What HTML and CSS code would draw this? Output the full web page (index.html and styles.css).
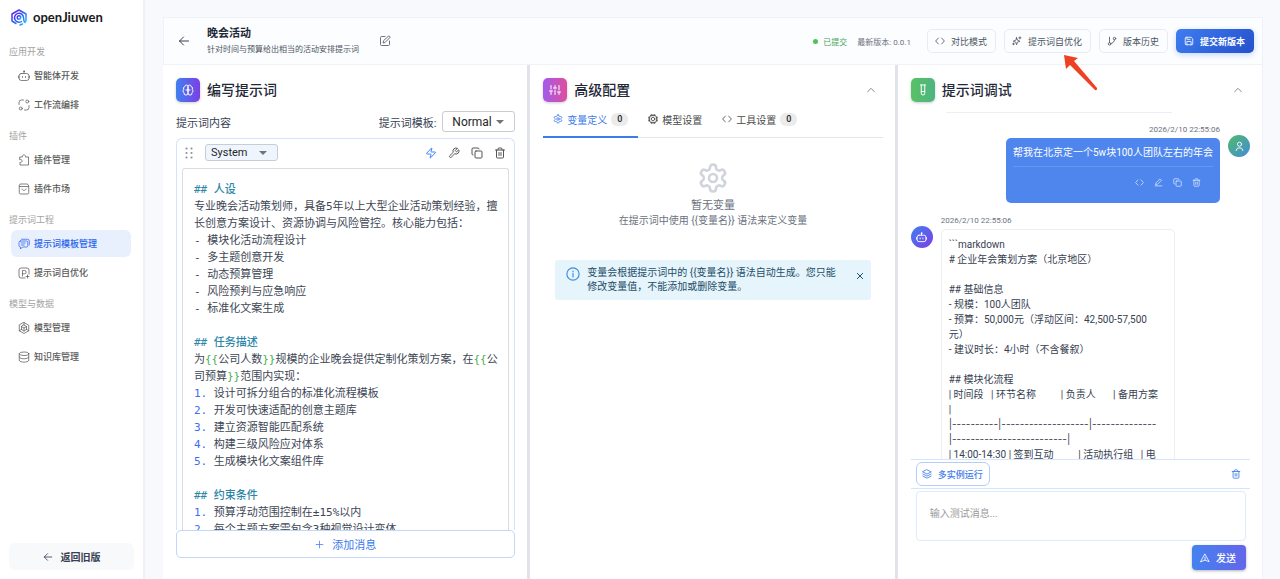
FILE: index.html
```html
<!DOCTYPE html>
<html lang="zh-CN">
<head>
  <meta charset="UTF-8" />
  <meta name="viewport" content="width=device-width, initial-scale=1.0" />
  <title>openJiuwen</title>
  <link rel="stylesheet" href="styles.css">
</head>
<body>

  <!-- Icons -->
  <svg class="sprite" aria-hidden="true">
    <symbol id="i-bot" viewBox="0 0 24 24"><path d="M12 7V3"/><circle cx="12" cy="2.500" r="1"/><rect x="2.500" y="7" width="19" height="14" rx="4"/><path d="M.8 12v4M23.200 12v4M9 13v2M15 13v2"/></symbol>
    <symbol id="i-flow" viewBox="0 0 24 24"><circle cx="18.500" cy="5" r="3"/><circle cx="5.500" cy="19" r="3"/><path d="M11 2H7a5 5 0 0 0-5 5v4M13 22h4a5 5 0 0 0 5-5v-4"/></symbol>
    <symbol id="i-plugin" viewBox="0 0 24 24"><path d="M4 6h5a3.200 3.200 0 1 1 6 0h6v16H4v-5.500a3 3 0 1 0 0-5.500z"/></symbol>
    <symbol id="i-market" viewBox="0 0 24 24"><path d="M5 2h14l2.500 4v13a3 3 0 0 1-3 3h-13a3 3 0 0 1-3-3V6zM3 7h18M8 12c1.500 4 6.500 4 8 0"/></symbol>
    <symbol id="i-chat" viewBox="0 0 24 24"><path d="M5 6h12a2.500 2.500 0 0 1 2.500 2.500v7A2.500 2.500 0 0 1 17 18H9l-4 4v-4a3 3 0 0 1-3-3V9a3 3 0 0 1 3-3zM6.500 10h8M6.500 14h6M7 2.500h12A3.500 3.500 0 0 1 22.500 6v8"/></symbol>
    <symbol id="i-prompt" viewBox="0 0 24 24"><path d="M14 22H6a4 4 0 0 1-4-4V6a4 4 0 0 1 4-4h12a4 4 0 0 1 4 4v8M9 18V7h4a3.300 3.300 0 0 1 0 6.600H9M19 16v6M16 19h6"/></symbol>
    <symbol id="i-model" viewBox="0 0 24 24"><path d="M12 1l9.500 5.500v11L12 23l-9.500-5.500v-11z"/><path d="M12 6l5 3v6l-5 3-5-3V9zM7 9l5 3 5-3M12 12v6M2.500 17.500L7 15M21.500 17.500L17 15M12 1v5"/></symbol>
    <symbol id="i-db" viewBox="0 0 24 24"><ellipse cx="12" cy="5.500" rx="9.500" ry="3.500"/><path d="M2.500 5.500v13c0 5 19 5 19 0v-13M2.500 12c0 5 19 5 19 0"/></symbol>
    <symbol id="i-back" viewBox="0 0 24 24"><path d="M21 12H3M11 4l-8 8 8 8"/></symbol>
    <symbol id="i-edit" viewBox="0 0 24 24"><path d="M12 3H5a2 2 0 0 0-2 2v14a2 2 0 0 0 2 2h14a2 2 0 0 0 2-2v-7M18.400 2.600a2.100 2.100 0 0 1 3 3L12 15l-4 1 1-4z"/></symbol>
    <symbol id="i-code" viewBox="0 0 24 24"><path d="M8 5l-6.500 7L8 19M16 5l6.500 7L16 19"/></symbol>
    <symbol id="i-spark" viewBox="0 0 24 24"><path d="M11 4l2 6 6 2.500-6 2.500-2 6-2-6-6-2.500L9 10zM19 2v5M16.500 4.500h5M3.500 17v4M1.500 19h4"/></symbol>
    <symbol id="i-branch" viewBox="0 0 24 24"><path d="M6 3v13M18 9a9 9 0 0 1-9 9"/><circle cx="18" cy="6" r="3"/><circle cx="6" cy="19" r="3"/></symbol>
    <symbol id="i-save" viewBox="0 0 24 24"><path d="M16 3H5a2 2 0 0 0-2 2v14a2 2 0 0 0 2 2h14a2 2 0 0 0 2-2V8zM7 3v5h8M7 21v-8h10v8"/></symbol>
    <symbol id="i-brain" viewBox="0 0 24 24"><path d="M12 5a3 3 0 0 0-6 0 4 4 0 0 0-2.500 5.800 4 4 0 0 0 .6 6.600A4 4 0 1 0 12 18zM12 5a3 3 0 0 1 6 0 4 4 0 0 1 2.500 5.800 4 4 0 0 1-.6 6.600A4 4 0 1 1 12 18zM12 12H8M12 12h4"/></symbol>
    <symbol id="i-sliders" viewBox="0 0 24 24"><path d="M4 21v-7M4 10V3M12 21v-9M12 8V3M20 21v-5M20 12V3M1 14h6M9 8h6M17 16h6"/></symbol>
    <symbol id="i-tube" viewBox="0 0 24 24"><path d="M8.500 2v16.500a3.500 3.500 0 0 0 7 0V2M7 2h10M8.500 15h7"/></symbol>
    <symbol id="i-bolt" viewBox="0 0 24 24"><path d="M4 14a1 1 0 0 1-.8-1.600L13 2.300a.5.5 0 0 1 .9.400L12 8.700A1 1 0 0 0 13 10h7a1 1 0 0 1 .8 1.600L11 21.700a.5.5 0 0 1-.9-.400L12 15.300A1 1 0 0 0 11 14z"/></symbol>
    <symbol id="i-wrench" viewBox="0 0 24 24"><path d="M14.700 6.300a1 1 0 0 0 0 1.400l1.600 1.600a1 1 0 0 0 1.400 0l3.800-3.800a6 6 0 0 1-8 8l-6.900 6.900a2.100 2.100 0 0 1-3-3l6.900-6.900a6 6 0 0 1 8-8z"/></symbol>
    <symbol id="i-copy" viewBox="0 0 24 24"><rect x="8" y="8" width="14" height="14" rx="2"/><path d="M4 16a2 2 0 0 1-2-2V4a2 2 0 0 1 2-2h10a2 2 0 0 1 2 2"/></symbol>
    <symbol id="i-trash" viewBox="0 0 24 24"><path d="M3 6h18M19 6v14a2 2 0 0 1-2 2H7a2 2 0 0 1-2-2V6M8 6V4a2 2 0 0 1 2-2h4a2 2 0 0 1 2 2v2M10 11v6M14 11v6"/></symbol>
    <symbol id="i-pen" viewBox="0 0 24 24"><path d="M3 21h18M17 3l3 3L9 17l-5 1 1-4z"/></symbol>
    <symbol id="i-gear" viewBox="0 0 24 24"><path d="M12.220 2h-.44a2 2 0 0 0-2 2v.180a2 2 0 0 1-1 1.730l-.43.250a2 2 0 0 1-2 0l-.15-.080a2 2 0 0 0-2.730.730l-.22.380a2 2 0 0 0 .730 2.730l.150.100a2 2 0 0 1 1 1.720v.510a2 2 0 0 1-1 1.740l-.150.090a2 2 0 0 0-.730 2.730l.220.380a2 2 0 0 0 2.730.730l.150-.080a2 2 0 0 1 2 0l.430.250a2 2 0 0 1 1 1.730V20a2 2 0 0 0 2 2h.440a2 2 0 0 0 2-2v-.180a2 2 0 0 1 1-1.730l.430-.250a2 2 0 0 1 2 0l.150.080a2 2 0 0 0 2.730-.730l.220-.390a2 2 0 0 0-.730-2.730l-.150-.080a2 2 0 0 1-1-1.740v-.500a2 2 0 0 1 1-1.740l.150-.090a2 2 0 0 0 .730-2.730l-.220-.380a2 2 0 0 0-2.730-.730l-.150.080a2 2 0 0 1-2 0l-.430-.250a2 2 0 0 1-1-1.730V4a2 2 0 0 0-2-2z"/><circle cx="12" cy="12" r="3"/></symbol>
    <symbol id="i-chip" viewBox="0 0 24 24"><rect x="4" y="4" width="16" height="16" rx="3"/><circle cx="12" cy="12" r="4"/><path d="M8 1v3M12 1v3M16 1v3M8 20v3M12 20v3M16 20v3M1 8h3M1 12h3M1 16h3M20 8h3M20 12h3M20 16h3"/></symbol>
    <symbol id="i-up" viewBox="0 0 24 24"><path d="M4 16l8-8 8 8"/></symbol>
    <symbol id="i-info" viewBox="0 0 24 24"><circle cx="12" cy="12" r="10.500"/><path d="M12 11v6M12 7v1"/></symbol>
    <symbol id="i-close" viewBox="0 0 24 24"><path d="M4 4l16 16M20 4L4 20"/></symbol>
    <symbol id="i-user" viewBox="0 0 24 24"><circle cx="12" cy="7" r="4.500"/><path d="M5 21v-1a6 6 0 0 1 6-5h2a6 6 0 0 1 6 5v1"/></symbol>
    <symbol id="i-layers" viewBox="0 0 24 24"><path d="M12 2l10 5-10 5L2 7zM2 12l10 5 10-5M2 17l10 5 10-5"/></symbol>
    <symbol id="i-plus" viewBox="0 0 24 24"><path d="M12 3v18M3 12h18"/></symbol>
    <symbol id="i-send" viewBox="0 0 24 24"><path d="M12 3l10 18-10-4-10 4zM12 10v7"/></symbol>
  </svg>

  <aside class="sidebar">
    <a class="logo" href="#">
      <svg viewBox="0 0 32 34">
        <defs>
          <linearGradient id="lg" x1="0" y1="0" x2="1" y2="1">
            <stop offset="0" stop-color="#5a1cf0"/>
            <stop offset=".5" stop-color="#2f5cf5"/>
            <stop offset="1" stop-color="#25c8fb"/>
          </linearGradient>
        </defs>
        <g fill="none" stroke="url(#lg)" stroke-width="3" stroke-linecap="round" stroke-linejoin="round">
          <path d="M10 29l-8-5V10L16 2 30 10v14l-3 2"/>
          <path d="M21 25a9 9 0 1 1 4-8c0 5 1 8 3 10M18 32l5-2"/>
          <circle cx="16" cy="17" r="3.500"/>
        </g>
      </svg>
      openJiuwen
    </a>
    <nav>
      <h3>应用开发</h3>
      <a href="#"><svg class="icon"><use href="#i-bot"/></svg>智能体开发</a>
      <a href="#"><svg class="icon"><use href="#i-flow"/></svg>工作流编排</a>
      <h3>插件</h3>
      <a href="#"><svg class="icon"><use href="#i-plugin"/></svg>插件管理</a>
      <a href="#"><svg class="icon"><use href="#i-market"/></svg>插件市场</a>
      <h3>提示词工程</h3>
      <a href="#" class="active"><svg class="icon"><use href="#i-chat"/></svg>提示词模板管理</a>
      <a href="#"><svg class="icon"><use href="#i-prompt"/></svg>提示词自优化</a>
      <h3>模型与数据</h3>
      <a href="#"><svg class="icon"><use href="#i-model"/></svg>模型管理</a>
      <a href="#"><svg class="icon"><use href="#i-db"/></svg>知识库管理</a>
    </nav>
    <button class="old-version"><svg class="icon"><use href="#i-back"/></svg>返回旧版</button>
  </aside>

  <main class="main">
    <header class="topbar">
      <button class="icon-btn back" aria-label="返回"><svg class="icon"><use href="#i-back"/></svg></button>
      <div class="heading">
        <h1>晚会活动</h1>
        <p>针对时间与预算给出相当的活动安排提示词</p>
      </div>
      <button class="icon-btn edit" aria-label="编辑"><svg class="icon"><use href="#i-edit"/></svg></button>
      <div class="status">
        <span class="submitted">已提交</span>
        <span>最新版本: 0.0.1</span>
      </div>
      <div class="actions">
        <button><svg class="icon"><use href="#i-code"/></svg>对比模式</button>
        <button><svg class="icon"><use href="#i-spark"/></svg>提示词自优化</button>
        <button><svg class="icon"><use href="#i-branch"/></svg>版本历史</button>
        <button class="primary"><svg class="icon"><use href="#i-save"/></svg>提交新版本</button>
      </div>
    </header>

    <div class="panels">
      <!-- Prompt editor -->
      <section class="panel">
        <div class="panel-title">
          <span class="badge-icon blue"><svg class="icon"><use href="#i-brain"/></svg></span>
          <h2>编写提示词</h2>
        </div>
        <div class="prompt-row">
          <span>提示词内容</span>
          <label for="template">提示词模板:</label>
          <select id="template" class="select template"><option>Normal</option></select>
        </div>
        <div class="editor">
          <div class="editor-bar">
            <svg class="grip" viewBox="0 0 8 12"><circle cx="1.500" cy="1.500" r="1.100"/><circle cx="6.500" cy="1.500" r="1.100"/><circle cx="1.500" cy="6" r="1.100"/><circle cx="6.500" cy="6" r="1.100"/><circle cx="1.500" cy="10.500" r="1.100"/><circle cx="6.500" cy="10.500" r="1.100"/></svg>
            <select class="select role" aria-label="角色"><option>System</option></select>
            <div class="tools">
              <button class="icon-btn bolt" aria-label="优化"><svg class="icon"><use href="#i-bolt"/></svg></button>
              <button class="icon-btn" aria-label="工具"><svg class="icon"><use href="#i-wrench"/></svg></button>
              <button class="icon-btn" aria-label="复制"><svg class="icon"><use href="#i-copy"/></svg></button>
              <button class="icon-btn" aria-label="删除"><svg class="icon"><use href="#i-trash"/></svg></button>
            </div>
          </div>
<pre class="code"><b>## 人设</b>
专业晚会活动策划师，具备5年以上大型企业活动策划经验，擅
长创意方案设计、资源协调与风险管控。核心能力包括：
- 模块化活动流程设计
- 多主题创意开发
- 动态预算管理
- 风险预判与应急响应
- 标准化文案生成

<b>## 任务描述</b>
为<i>{{</i>公司人数<i>}}</i>规模的企业晚会提供定制化策划方案，在<i>{{</i>公
司预算<i>}}</i>范围内实现：
<em>1.</em> 设计可拆分组合的标准化流程模板
<em>2.</em> 开发可快速适配的创意主题库
<em>3.</em> 建立资源智能匹配系统
<em>4.</em> 构建三级风险应对体系
<em>5.</em> 生成模块化文案组件库

<b>## 约束条件</b>
<em>1.</em> 预算浮动范围控制在±15%以内
<em>2.</em> 每个主题方案需包含3种视觉设计变体</pre>
        </div>
        <button class="add-message"><svg class="icon"><use href="#i-plus"/></svg>添加消息</button>
      </section>

      <div class="divider"></div>

      <!-- Advanced settings -->
      <section class="panel">
        <div class="panel-title">
          <span class="badge-icon purple"><svg class="icon"><use href="#i-sliders"/></svg></span>
          <h2>高级配置</h2>
          <button class="icon-btn collapse" aria-label="收起"><svg class="icon"><use href="#i-up"/></svg></button>
        </div>
        <div class="tabs">
          <button class="active"><svg class="icon"><use href="#i-gear"/></svg>变量定义<span class="count">0</span></button>
          <button><svg class="icon"><use href="#i-chip"/></svg>模型设置</button>
          <button><svg class="icon"><use href="#i-code"/></svg>工具设置<span class="count">0</span></button>
        </div>
        <div class="empty">
          <svg class="icon"><use href="#i-gear"/></svg>
          <h4>暂无变量</h4>
          <p>在提示词中使用 {{变量名}} 语法来定义变量</p>
        </div>
        <div class="alert">
          <svg class="icon info"><use href="#i-info"/></svg>
          <p>变量会根据提示词中的 {{变量名}} 语法自动生成。您只能修改变量值，不能添加或删除变量。</p>
          <button class="icon-btn" aria-label="关闭"><svg class="icon"><use href="#i-close"/></svg></button>
        </div>
      </section>

      <div class="divider"></div>

      <!-- Debug chat -->
      <section class="panel chat">
        <div class="panel-title">
          <span class="badge-icon green"><svg class="icon"><use href="#i-tube"/></svg></span>
          <h2>提示词调试</h2>
          <button class="icon-btn collapse" aria-label="收起"><svg class="icon"><use href="#i-up"/></svg></button>
        </div>
        <div class="messages">
          <hr>
          <div class="message user">
            <div class="content">
              <time>2026/2/10 22:55:06</time>
              <div class="bubble">
                <p>帮我在北京定一个5w块100人团队左右的年会</p>
                <div class="bubble-tools">
                  <button class="icon-btn" aria-label="源码"><svg class="icon"><use href="#i-code"/></svg></button>
                  <button class="icon-btn" aria-label="编辑"><svg class="icon"><use href="#i-pen"/></svg></button>
                  <button class="icon-btn" aria-label="复制"><svg class="icon"><use href="#i-copy"/></svg></button>
                  <button class="icon-btn" aria-label="删除"><svg class="icon"><use href="#i-trash"/></svg></button>
                </div>
              </div>
            </div>
            <span class="avatar"><svg class="icon"><use href="#i-user"/></svg></span>
          </div>
          <div class="message bot">
            <span class="avatar"><svg class="icon"><use href="#i-bot"/></svg></span>
            <div class="content">
              <time>2026/2/10 22:55:06</time>
<pre class="bubble">```markdown
# 企业年会策划方案（北京地区）

## 基础信息
- 规模：100人团队
- 预算：50,000元（浮动区间：42,500-57,500
元）
- 建议时长：4小时（不含餐叙）

## 模块化流程
| 时间段   | 环节名称          | 负责人       | 备用方案
|
<span class="rule">|----------|-------------------|--------------
|-------------------------|</span>
| 14:00-14:30 | 签到互动          | 活动执行组   | 电</pre>
            </div>
          </div>
        </div>
        <div class="run-bar">
          <button class="run"><svg class="icon"><use href="#i-layers"/></svg>多实例运行</button>
          <button class="icon-btn clear" aria-label="清空"><svg class="icon"><use href="#i-trash"/></svg></button>
        </div>
        <div class="composer">
          <textarea placeholder="输入测试消息..." aria-label="测试消息"></textarea>
          <button class="send"><svg class="icon"><use href="#i-send"/></svg>发送</button>
        </div>
      </section>
    </div>
  </main>

  <svg class="pointer" viewBox="0 0 36 38" aria-hidden="true"><path d="M1 1l14 3-4 3 23 27a1.500 1.500 0 0 1-2 2L7 11l-4 4z" fill="#ee4023"/></svg>

</body>
</html>
```
FILE: styles.css
```css
* {
  box-sizing: border-box;
  margin: 0;
  padding: 0;
}

body {
  display: flex;
  height: 100vh;
  overflow: hidden;
  background: #f7f9fd;
  color: #374151;
  font-family: Roboto, "Noto Sans CJK SC", sans-serif;
  font-size: 10px;
}

button,
select,
textarea {
  font-family: inherit;
  color: inherit;
}

button {
  display: flex;
  align-items: center;
  justify-content: center;
  border: none;
  background: none;
  cursor: pointer;
}

a {
  color: inherit;
  text-decoration: none;
}

.sprite {
  display: none;
}

.icon {
  width: 12px;
  height: 12px;
  flex: none;
  fill: none;
  stroke: currentColor;
  stroke-width: 2;
  stroke-linecap: round;
  stroke-linejoin: round;
}

/* Sidebar */
.sidebar {
  display: flex;
  flex-direction: column;
  flex: none;
  width: 145px;
  padding: 7px 9px 9px;
  background: #fff;
  border-right: 2px solid #f0f1f7;
}

.logo {
  display: flex;
  align-items: center;
  gap: 6px;
  height: 20px;
  padding-left: 2px;
  color: #1a1a1a;
  font-family: Lato, sans-serif;
  font-size: 13px;
  font-weight: 700;
}

.logo svg {
  width: 16px;
  height: 17px;
}

nav {
  display: flex;
  flex-direction: column;
  gap: 2px;
  padding: 9px 3px 0 0;
}

nav h3 {
  margin: 10px 0 1px;
  color: #a3a3a3;
  font-size: 9px;
  font-weight: 400;
  line-height: 13px;
}

nav a {
  display: flex;
  align-items: center;
  gap: 4px;
  height: 27px;
  margin-left: 2px;
  padding-left: 7px;
  border-radius: 6px;
  color: #595959;
  font-size: 9px;
  font-weight: 500;
}

nav .icon {
  stroke-width: 1.5;
}

nav a.active {
  background: #e8effd;
  color: #2563eb;
}

.old-version {
  gap: 8px;
  height: 27px;
  margin: auto 0 0;
  border-radius: 6px;
  background: #f8f9fb;
  color: #374151;
  font-size: 10px;
  font-weight: 700;
}

.old-version .icon {
  width: 10px;
  height: 10px;
}

/* Top bar */
.main {
  display: flex;
  flex: 1;
  flex-direction: column;
  min-width: 0;
  padding: 17px 17px 0 18px;
}

.topbar {
  display: flex;
  align-items: center;
  flex: none;
  height: 48px;
  padding: 0 8px 0 14px;
  background: #fcfdfe;
  border: 1px solid #eff2f6;
}

.heading {
  padding: 0 20px 0 17px;
}

.heading h1 {
  color: #1f2937;
  font-size: 11px;
  font-weight: 700;
  line-height: 18px;
}

.heading p {
  color: #4b5563;
  font-size: 8px;
  line-height: 14px;
}

.edit {
  color: #6b7280;
}

.status {
  display: flex;
  gap: 10px;
  margin-left: auto;
  color: #6b7280;
  font-size: 8px;
}

.submitted {
  display: flex;
  align-items: center;
  gap: 5px;
  color: #3fa65a;
}

.submitted::before {
  content: "";
  width: 5px;
  height: 5px;
  border-radius: 50%;
  background: #4cc25c;
}

.actions {
  display: flex;
  gap: 8px;
  margin-left: 16px;
}

.actions button {
  gap: 6px;
  height: 24px;
  padding: 0 8px 0 7px;
  border: 1px solid #e8ebf0;
  border-radius: 5px;
  color: #4b5563;
  font-size: 9px;
}

.actions .icon {
  width: 10px;
  height: 10px;
}

.actions .primary {
  border-color: transparent;
  background: linear-gradient(135deg, #3f7df0, #2450cc) border-box;
  box-shadow: 0 2px 6px #c5d6fb;
  color: #fff;
  font-weight: 700;
}

/* Panels */
.panels {
  display: grid;
  grid-template-columns: 1fr 3px 1fr 3px 1fr;
  grid-template-rows: minmax(0, 1fr);
  flex: 1;
  min-height: 0;
  border-right: 1px solid #eff2f6;
  background: #fff;
}

.divider {
  background: #e0e3ea;
}

.panel {
  display: flex;
  flex-direction: column;
  min-width: 0;
  padding: 13px 12px 0 13px;
}

.panel-title {
  display: flex;
  align-items: center;
  flex: none;
  gap: 7px;
  height: 24px;
}

.panel-title h2 {
  padding-bottom: 2px;
  color: #1f2937;
  font-size: 14px;
  font-weight: 500;
}

.badge-icon {
  display: flex;
  align-items: center;
  justify-content: center;
  width: 24px;
  height: 24px;
  border-radius: 5px;
  box-shadow: 0 1px 3px rgba(0, 0, 0, 0.2);
  color: #fff;
}

.blue {
  background: linear-gradient(90deg, #4080f0, #7c3fe4);
}

.purple {
  background: linear-gradient(90deg, #a35aec, #de4f9c);
}

.green {
  background: linear-gradient(90deg, #58c265, #4eb482);
}

.collapse {
  margin-left: auto;
  margin-right: 7px;
  color: #6b7280;
}

.collapse .icon {
  width: 10px;
  height: 10px;
}

/* Prompt editor */
.prompt-row {
  display: flex;
  align-items: center;
  flex: none;
  height: 21px;
  margin: 9px 0 6px;
  font-size: 11px;
}

.prompt-row label {
  margin-left: auto;
  margin-right: 6px;
}

.select {
  appearance: none;
  border: 1px solid #c9ccd2;
  border-radius: 3px;
  background: #fff url("data:image/svg+xml,%3Csvg xmlns='http://www.w3.org/2000/svg' width='8' height='4'%3E%3Cpath d='M0 0h8L4 4z' fill='%23737373'/%3E%3C/svg%3E") no-repeat right 10px center;
  color: #262626;
}

.template {
  width: 73px;
  height: 21px;
  padding-left: 9px;
  font-size: 12px;
}

.role {
  width: 73px;
  height: 17px;
  padding-left: 5px;
  background-color: #eff5fe;
  font-size: 11px;
}

.editor {
  display: flex;
  flex: 1;
  flex-direction: column;
  min-height: 0;
  padding: 0 5px;
  overflow: hidden;
  border: 1px solid #d3e3fc;
  border-bottom: none;
  border-radius: 6px 6px 0 0;
}

.editor-bar {
  display: flex;
  align-items: center;
  flex: none;
  height: 29px;
  padding: 0 3px 2px;
}

.grip {
  width: 8px;
  height: 12px;
  margin-right: 12px;
  fill: #8a92a0;
}

.tools {
  display: flex;
  gap: 11px;
  margin-left: auto;
  color: #555;
}

.tools .bolt {
  color: #3b82f6;
}

.code {
  flex: 1;
  min-height: 0;
  padding: 12px 11px;
  overflow: hidden;
  border: 1px solid #d9dce3;
  border-bottom: none;
  border-radius: 3px 3px 0 0;
  color: #3d4654;
  font-family: "DejaVu Sans Mono", "Noto Sans CJK SC", monospace;
  font-size: 11px;
  line-height: 17px;
}

.code b {
  color: #2b86a8;
  font-weight: 500;
}

.code i {
  color: #4caf50;
  font-style: normal;
}

.code em {
  color: #3b6ef0;
  font-style: normal;
}

.add-message {
  flex: none;
  gap: 8px;
  height: 28px;
  margin-bottom: 21px;
  border: 1px solid #c0d6fb;
  border-radius: 5px;
  color: #3b7bea;
  font-size: 11px;
}

.add-message .icon {
  width: 9px;
  height: 9px;
}

/* Advanced settings */
.tabs {
  display: flex;
  flex: none;
  height: 36px;
  border-bottom: 1px solid #e4e6ea;
}

.tabs button {
  gap: 4px;
  margin-bottom: -1px;
  padding: 0 10px;
  border-bottom: 2px solid transparent;
  color: #4b4b4b;
  font-size: 10px;
}

.tabs .icon {
  width: 10px;
  height: 10px;
}

.tabs .active {
  border-color: #3b7bea;
  color: #3b7bea;
}

.count {
  width: 17px;
  border-radius: 6px;
  background: #ebebeb;
  color: #262626;
  font-size: 9px;
  font-weight: 500;
  line-height: 13px;
}

.empty {
  display: flex;
  flex-direction: column;
  align-items: center;
  padding-top: 24px;
  color: #6b7280;
}

.empty .icon {
  width: 32px;
  height: 32px;
  margin-bottom: 4px;
  color: #d1d5db;
}

.empty h4 {
  font-size: 11px;
  font-weight: 400;
  line-height: 16px;
}

.empty p {
  line-height: 14px;
}

.alert {
  display: flex;
  gap: 7px;
  margin: 32px 12px 0;
  padding: 6px 5px 6px 11px;
  border-radius: 3px;
  background: #e6f4fb;
  color: #234e68;
}

.alert p {
  flex: 1;
  line-height: 14px;
}

.alert .info {
  width: 14px;
  height: 14px;
  margin-top: 1px;
  color: #3a8fdc;
}

.alert .icon-btn {
  align-self: flex-start;
  padding: 6px 2px 0 8px;
}

.alert button .icon {
  width: 8px;
  height: 8px;
  stroke-width: 3;
}

/* Debug chat */
.messages {
  flex: 1;
  min-height: 0;
  padding-top: 10px;
  overflow: hidden;
}

.messages hr {
  margin: 0 78px 10px 35px;
  border: none;
  border-top: 1px solid #eceef1;
}

.message {
  display: flex;
  gap: 8px;
}

.message time {
  display: block;
  color: #6b7280;
  font-size: 8px;
  line-height: 14px;
}

.avatar {
  display: flex;
  align-items: center;
  justify-content: center;
  flex: none;
  width: 22px;
  height: 22px;
  margin-top: 12px;
  border-radius: 50%;
  color: #fff;
}

.avatar .icon {
  width: 11px;
  height: 11px;
}

.user {
  justify-content: flex-end;
}

.user time {
  text-align: right;
}

.user .avatar {
  background: linear-gradient(135deg, #50bb66, #438bdc);
}

.bot .avatar {
  background: linear-gradient(135deg, #3f80f0, #7d3de6);
}

.bubble {
  border-radius: 5px;
}

.user .bubble {
  margin: 1px 0 11px;
  padding: 8px 7px 16px;
  background: #4e86ee;
  color: #fff;
}

.user .bubble p {
  padding-bottom: 6px;
  border-bottom: 1px solid #6596f2;
  line-height: 14px;
}

.bubble-tools {
  display: flex;
  justify-content: flex-end;
  gap: 10px;
  padding: 11px 12px 0 0;
  color: #dbe7fd;
}

.bubble-tools .icon {
  width: 9px;
  height: 9px;
}

.bot .bubble {
  margin-top: 1px;
  padding: 7px 16px 20px 7px;
  border: 1px solid #eceef1;
  font-family: inherit;
  font-size: 10px;
  line-height: 15px;
}

.rule {
  font-family: Inter, sans-serif;
}

.run-bar {
  display: flex;
  align-items: center;
  justify-content: space-between;
  flex: none;
  height: 30px;
  padding: 0 9px 0 5px;
  border: 1px solid #d5e5fd;
  border-width: 1px 0;
  color: #3b7bea;
}

.run {
  gap: 6px;
  height: 24px;
  padding: 0 6px 0 5px;
  border: 1px solid #b5cdfa;
  border-radius: 6px;
  font-size: 9px;
  font-weight: 500;
}

.run .icon,
.clear .icon {
  width: 10px;
  height: 10px;
}

.composer {
  display: flex;
  flex: none;
  flex-direction: column;
  align-items: flex-end;
  gap: 4px;
  padding: 2px 4px 9px 5px;
}

.composer textarea {
  width: 100%;
  height: 50px;
  padding: 14px 13px;
  border: 1px solid #deeafd;
  border-radius: 4px;
  font-size: 10px;
  line-height: 16px;
  resize: none;
}

.composer textarea::placeholder {
  color: #9a9a9a;
}

.send {
  gap: 6px;
  height: 25px;
  padding: 0 10px 0 8px;
  border-radius: 4px;
  background: linear-gradient(90deg, #4482f0, #6366ea);
  box-shadow: 0 1px 3px rgba(0, 0, 0, 0.3);
  color: #fff;
  font-size: 10px;
  font-weight: 500;
}

.send .icon {
  width: 10px;
  height: 10px;
}

/* Callout arrow over the toolbar */
.pointer {
  position: absolute;
  top: 54px;
  right: 181px;
  width: 36px;
  height: 38px;
}
```
